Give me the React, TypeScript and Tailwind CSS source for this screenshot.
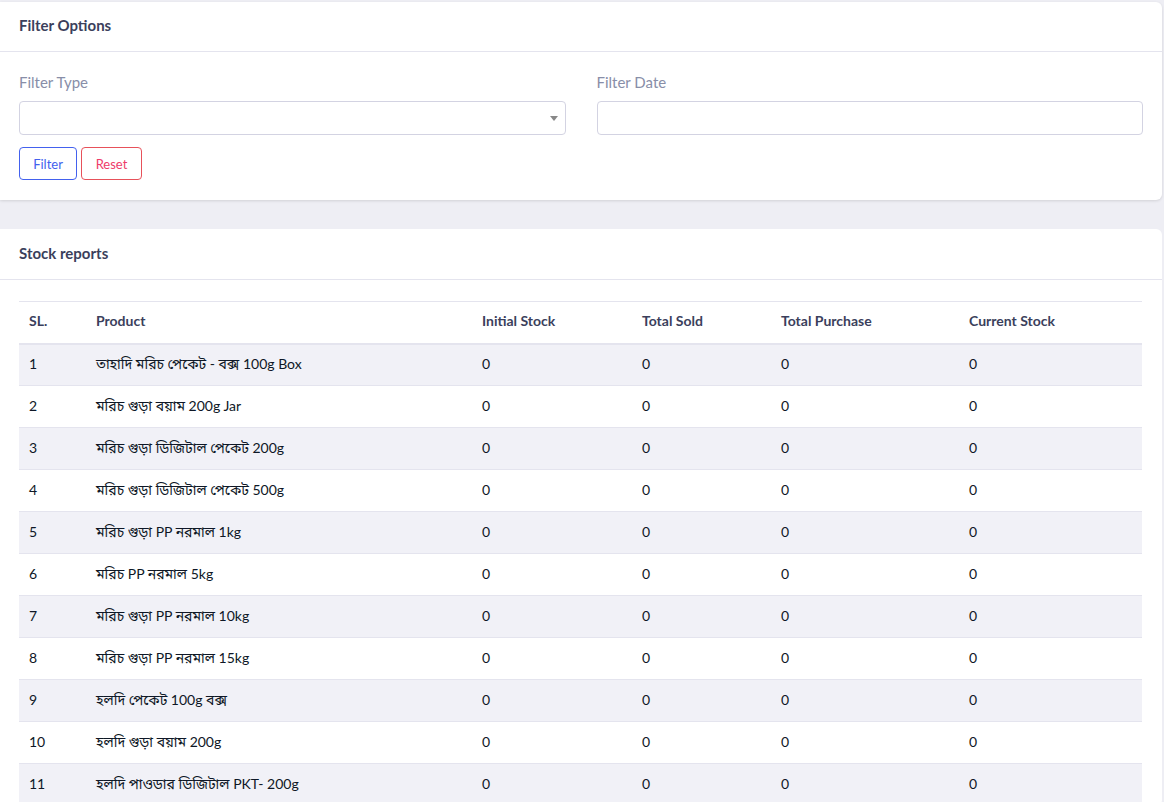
import React from "react";

const rows = [
  "তাহাদি মরিচ পেকেট - বক্স 100g Box",
  "মরিচ গুড়া বয়াম 200g Jar",
  "মরিচ গুড়া ডিজিটাল পেকেট 200g",
  "মরিচ গুড়া ডিজিটাল পেকেট 500g",
  "মরিচ গুড়া PP নরমাল 1kg",
  "মরিচ PP নরমাল 5kg",
  "মরিচ গুড়া PP নরমাল 10kg",
  "মরিচ গুড়া PP নরমাল 15kg",
  "হলদি পেকেট 100g বক্স",
  "হলদি গুড়া বয়াম 200g",
  "হলদি পাওডার ডিজিটাল PKT- 200g",
];

export default function App() {
  return (
    <div
      className="min-h-screen bg-[#eeeef4] pt-[2px] pr-[2px] text-sm"
      style={{ fontFamily: "Lato, 'Noto Sans', 'Noto Sans Bengali', sans-serif" }}
    >
      {/* filter card */}
      <div className="bg-white rounded-r-md shadow-[0_1px_3px_rgba(0,0,0,0.12)]">
        <div className="h-[50px] px-[19px] pb-[2px] flex items-center border-b border-[#e4e4ee]">
          <h4 className="text-[15px] font-bold text-[#3b3f5c]">Filter Options</h4>
        </div>
        <div className="px-[19px] pt-[20px] pb-[20px]">
          <div className="grid grid-cols-2 gap-[31px]">
            <div>
              <label className="block text-[15px] text-[#888ea8] mb-[8px]">Filter Type</label>
              <div className="relative h-[34px] border border-[#d3d3e2] rounded">
                <span className="absolute right-[7px] top-[14px] w-0 h-0 border-l-[4px] border-r-[4px] border-t-[5px] border-l-transparent border-r-transparent border-t-[#888]" />
              </div>
            </div>
            <div>
              <label className="block text-[15px] text-[#888ea8] mb-[8px]">Filter Date</label>
              <div className="h-[34px] border border-[#d3d3e2] rounded" />
            </div>
          </div>
          <div className="flex gap-[4px] mt-[12px]">
            <button className="h-[33px] w-[58px] border border-[#4361ee] text-[#4361ee] text-[13px] rounded-sm">Filter</button>
            <button className="h-[33px] w-[61px] border border-[#e7515a] text-[#ee3b6a] text-[13px] rounded-sm">Reset</button>
          </div>
        </div>
      </div>

      {/* stock card */}
      <div className="mt-[29px] bg-white rounded-r-md">
        <div className="h-[51px] px-[19px] pb-[2px] flex items-center border-b border-[#e4e4ee]">
          <h4 className="text-[15px] font-bold text-[#3b3f5c]">Stock reports</h4>
        </div>
        <div className="px-[19px] pt-[21px]">
          <table className="w-[1123px] table-fixed border-collapse">
            <colgroup>
              <col className="w-[67px]" />
              <col className="w-[386px]" />
              <col className="w-[160px]" />
              <col className="w-[139px]" />
              <col className="w-[188px]" />
              <col className="w-[183px]" />
            </colgroup>
            <thead>
              <tr className="h-[42px] border-t border-b-2 border-[#e4e4ee] text-left text-[#3b3f5c]">
                <th className="px-[10px] pb-[4px] font-bold">SL.</th>
                <th className="px-[10px] pb-[4px] font-bold">Product</th>
                <th className="px-[10px] pb-[4px] font-bold">Initial Stock</th>
                <th className="px-[10px] pb-[4px] font-bold">Total Sold</th>
                <th className="px-[10px] pb-[4px] font-bold">Total Purchase</th>
                <th className="px-[10px] pb-[4px] font-bold">Current Stock</th>
              </tr>
            </thead>
            <tbody className="text-[#0e1726]">
              {rows.map((name, i) => (
                <tr key={i} className={"h-[42px] border-b border-[#e4e4ee] " + (i % 2 === 0 ? "bg-[#f1f1f7]" : "bg-white")}>
                  <td className="px-[10px] pb-[2px]">{i + 1}</td>
                  <td className="px-[10px] pb-[2px]">{name}</td>
                  <td className="px-[10px] pb-[2px]">0</td>
                  <td className="px-[10px] pb-[2px]">0</td>
                  <td className="px-[10px] pb-[2px]">0</td>
                  <td className="px-[10px] pb-[2px]">0</td>
                </tr>
              ))}
            </tbody>
          </table>
        </div>
      </div>
    </div>
  );
}
